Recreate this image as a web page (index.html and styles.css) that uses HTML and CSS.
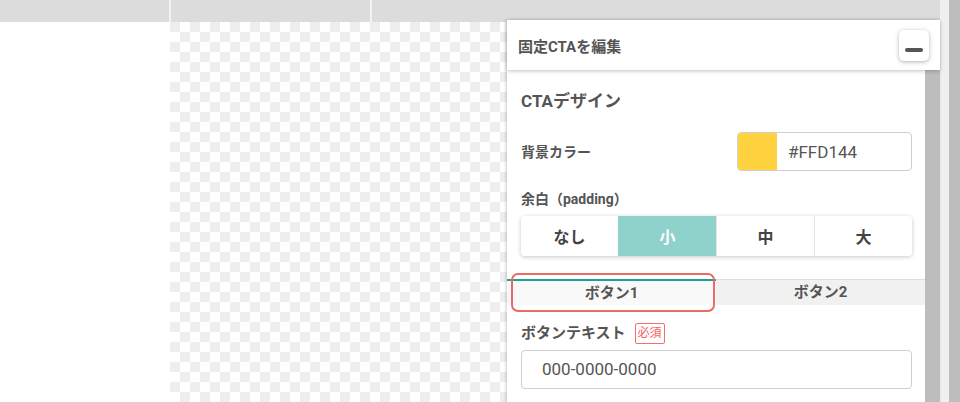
FILE: index.html
```html
<!DOCTYPE html>
<html lang="ja">

<head>
    <meta charset="UTF-8">
    <meta name="viewport" content="width=device-width, initial-scale=1.0">
    <title>固定CTAを編集</title>
    <link rel="stylesheet" href="styles.css">
</head>

<body>
    <div class="workspace">
        <div class="toolbar">
            <div class="toolbar-cell cell-first"></div>
            <div class="toolbar-cell cell-second"></div>
            <div class="toolbar-cell cell-rest"></div>
        </div>
        <div class="stage">
            <div class="sidebar"></div>
            <div class="canvas"></div>
        </div>

        <!-- 編集パネル（キャンバスの上に浮いている） -->
        <div class="editor">
            <div class="editor-header">
                <span class="editor-title">固定CTAを編集</span>
                <button class="minimize-btn" aria-label="最小化"><span class="dash"></span></button>
            </div>
            <div class="editor-main">
                <div class="editor-body">
                    <div class="section-title">CTAデザイン</div>

                    <div class="field-row">
                        <span class="field-label">背景カラー</span>
                        <div class="color-input">
                            <span class="swatch"></span>
                            <span class="color-code">#FFD144</span>
                        </div>
                    </div>

                    <div class="field-label padding-label">余白（padding）</div>
                    <div class="segmented">
                        <button class="segment">なし</button>
                        <button class="segment active">小</button>
                        <button class="segment">中</button>
                        <button class="segment">大</button>
                    </div>

                    <div class="tabs">
                        <div class="tab active">ボタン1</div>
                        <div class="tab">ボタン2</div>
                    </div>
                    <div class="highlight"></div>

                    <div class="field-label text-label">ボタンテキスト <span class="required">必須</span></div>
                    <div class="text-input">000-0000-0000</div>
                </div>
                <div class="scrollbar"></div>
            </div>
        </div>
    </div>
    <div class="rail">
        <div class="rail-light"></div>
        <div class="rail-dark"></div>
    </div>
</body>

</html>
```

FILE: styles.css
```css
body {
    margin: 0;
    display: flex;
    height: 402px;
    overflow: hidden;
    font-family: Roboto, "Noto Sans CJK JP", sans-serif;
    color: #555;
}

.workspace {
    position: relative;
    width: 940px;
    display: flex;
    flex-direction: column;
}

.toolbar {
    display: flex;
    height: 22px;
    background-color: #dcdcdc;
}

.toolbar-cell {
    height: 100%;
}

.cell-first {
    width: 169px;
}

.cell-second {
    width: 199px;
    border-left: 2px solid #f3f3f3;
}

.cell-rest {
    flex: 1;
    border-left: 2px solid #f3f3f3;
}

.stage {
    display: flex;
    flex: 1;
}

.sidebar {
    width: 170px;
    background-color: #fff;
}

.canvas {
    flex: 1;
    background-color: #fff;
    background-image:
        linear-gradient(45deg, #eeeeee 25%, transparent 25%, transparent 75%, #eeeeee 75%),
        linear-gradient(45deg, #eeeeee 25%, transparent 25%, transparent 75%, #eeeeee 75%);
    background-size: 20px 20px;
    background-position: 10px 0, 0 10px;
}

.rail {
    display: flex;
    width: 20px;
}

.rail-light {
    width: 9px;
    background-color: #f0f0f0;
}

.rail-dark {
    flex: 1;
    background-color: #bdbdbd;
}

/* パネル */
.editor {
    position: absolute;
    left: 507px;
    top: 20px;
    width: 433px;
    bottom: 0;
    display: flex;
    flex-direction: column;
    box-shadow: -1px 0 3px rgba(0, 0, 0, 0.2);
}

.editor-header {
    position: relative;
    z-index: 2;
    display: flex;
    align-items: center;
    justify-content: space-between;
    height: 50px;
    padding: 0 11px;
    background-color: #fff;
    box-shadow: 0 1px 4px rgba(0, 0, 0, 0.25);
}

.editor-title {
    font-size: 15px;
    font-weight: bold;
    color: #555;
}

.minimize-btn {
    position: relative;
    width: 30px;
    height: 31px;
    padding: 0;
    border: none;
    border-radius: 5px;
    background-color: #fff;
    box-shadow: 0 1px 4px rgba(0, 0, 0, 0.3);
}

.dash {
    position: absolute;
    left: 6px;
    top: 18px;
    width: 18px;
    height: 4px;
    border-radius: 2px;
    background-color: #555;
}

.editor-main {
    display: flex;
    flex: 1;
}

.editor-body {
    position: relative;
    width: 391px;
    padding: 21px 13px 0 14px;
    background-color: #fff;
}

.scrollbar {
    flex: 1;
    background-color: #bdbdbd;
}

.section-title {
    height: 20px;
    line-height: 20px;
    font-size: 17px;
    font-weight: bold;
}

.field-row {
    display: flex;
    align-items: center;
    justify-content: space-between;
    margin-top: 21px;
}

.field-label {
    font-size: 14px;
    font-weight: bold;
    line-height: 18px;
}

.color-input {
    display: flex;
    align-items: center;
    width: 173px;
    height: 37px;
    border: 1px solid #cfcfcf;
    border-radius: 4px;
    overflow: hidden;
}

.swatch {
    width: 39px;
    height: 100%;
    background-color: #ffd23f;
}

.color-code {
    padding-left: 11px;
    font-size: 17px;
}

.padding-label {
    margin-top: 19px;
}

.segmented {
    display: flex;
    margin-top: 8px;
    height: 40px;
    border-radius: 4px;
    box-shadow: 0 1px 4px rgba(0, 0, 0, 0.22);
    overflow: hidden;
}

.segment {
    flex: 1;
    border: none;
    border-left: 1px solid #e4e4e4;
    background-color: #fff;
    font-family: inherit;
    font-size: 16px;
    font-weight: bold;
    color: #444;
}

.segment:first-child {
    border-left: none;
}

.segment.active {
    background-color: #8fd1cb;
    color: #fff;
    border-left-color: #8fd1cb;
}

.tabs {
    display: flex;
    margin: 23px -13px 0 -14px;
}

.tab {
    flex: 1;
    height: 25px;
    line-height: 25px;
    text-align: center;
    font-size: 15px;
    font-weight: bold;
    color: #555;
    background-color: #f1f1f1;
    border-top: 1px solid #dedede;
}

.tab.active {
    background-color: #f9f9f9;
    border-top: 2px solid #1aa394;
    height: 24px;
}

/* 注目枠 */
.highlight {
    position: absolute;
    left: 4px;
    top: 203px;
    width: 200px;
    height: 35px;
    border: 2px solid #ec6a66;
    border-radius: 7px;
}

.text-label {
    display: flex;
    align-items: center;
    margin-top: 18px;
    height: 20px;
    font-size: 15px;
}

.required {
    margin-left: 9px;
    padding: 1px 2px;
    border: 1px solid #f2706c;
    border-radius: 2px;
    font-size: 12px;
    font-weight: normal;
    line-height: 17px;
    color: #f2605c;
}

.text-input {
    margin-top: 7px;
    height: 37px;
    line-height: 37px;
    padding-left: 20px;
    border: 1px solid #cfcfcf;
    border-radius: 4px;
    font-size: 17px;
}
```
